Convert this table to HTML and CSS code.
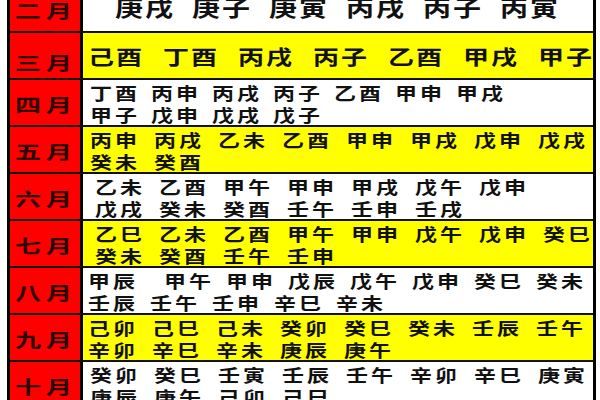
FILE: index.html
```html
<!DOCTYPE html>
<html lang="zh">
<head>
<meta charset="utf-8">
<title>月份干支表</title>
<link rel="stylesheet" href="styles.css">
</head>
<body>
<div class="table">
  <div class="row white">
    <div class="month"><span class="m">二月</span></div>
    <div class="cells big2 s-32">
      <div class="line"><span class="p">庚戌</span><span class="p">庚子</span><span class="p">庚寅</span><span class="p">丙戌</span><span class="p">丙子</span><span class="p">丙寅</span></div>
    </div>
  </div>
  <div class="row yellow">
    <div class="month low"><span class="m">三月</span></div>
    <div class="cells big s-5">
      <div class="line"><span class="p">己酉</span><span class="p">丁酉</span><span class="p">丙戌</span><span class="p">丙子</span><span class="p">乙酉</span><span class="p">甲戌</span><span class="p">甲子</span></div>
    </div>
  </div>
  <div class="row white">
    <div class="month"><span class="m">四月</span></div>
    <div class="cells tight s-7">
      <div class="line"><span class="p">丁酉</span><span class="p">丙申</span><span class="p">丙戌</span><span class="p">丙子</span><span class="p">乙酉</span><span class="p">甲申</span><span class="p">甲戌</span></div>
      <div class="line"><span class="p">甲子</span><span class="p">戊申</span><span class="p">戊戌</span><span class="p">戊子</span></div>
    </div>
  </div>
  <div class="row yellow">
    <div class="month"><span class="m">五月</span></div>
    <div class="cells s-7">
      <div class="line"><span class="p">丙申</span><span class="p">丙戌</span><span class="p">乙未</span><span class="p">乙酉</span><span class="p">甲申</span><span class="p">甲戌</span><span class="p">戊申</span><span class="p">戊戌</span></div>
      <div class="line"><span class="p">癸未</span><span class="p">癸酉</span></div>
    </div>
  </div>
  <div class="row white">
    <div class="month"><span class="m">六月</span></div>
    <div class="cells s-12">
      <div class="line"><span class="p">乙未</span><span class="p">乙酉</span><span class="p">甲午</span><span class="p">甲申</span><span class="p">甲戌</span><span class="p">戊午</span><span class="p">戊申</span></div>
      <div class="line"><span class="p">戊戌</span><span class="p">癸未</span><span class="p">癸酉</span><span class="p">壬午</span><span class="p">壬申</span><span class="p">壬戌</span></div>
    </div>
  </div>
  <div class="row yellow">
    <div class="month"><span class="m">七月</span></div>
    <div class="cells s-12">
      <div class="line"><span class="p">乙巳</span><span class="p">乙未</span><span class="p">乙酉</span><span class="p">甲午</span><span class="p">甲申</span><span class="p">戊午</span><span class="p">戊申</span><span class="p">癸巳</span></div>
      <div class="line"><span class="p">癸未</span><span class="p">癸酉</span><span class="p">壬午</span><span class="p">壬申</span></div>
    </div>
  </div>
  <div class="row white">
    <div class="month"><span class="m">八月</span></div>
    <div class="cells mid s-5">
      <div class="line"><span class="p wide">甲辰</span><span class="p">甲午</span><span class="p">甲申</span><span class="p">戊辰</span><span class="p">戊午</span><span class="p">戊申</span><span class="p">癸巳</span><span class="p">癸未</span></div>
      <div class="line"><span class="p">壬辰</span><span class="p">壬午</span><span class="p">壬申</span><span class="p">辛巳</span><span class="p">辛未</span></div>
    </div>
  </div>
  <div class="row yellow">
    <div class="month"><span class="m">九月</span></div>
    <div class="cells s-5">
      <div class="line"><span class="p">己卯</span><span class="p">己巳</span><span class="p">己未</span><span class="p">癸卯</span><span class="p">癸巳</span><span class="p">癸未</span><span class="p">壬辰</span><span class="p">壬午</span></div>
      <div class="line"><span class="p">辛卯</span><span class="p">辛巳</span><span class="p">辛未</span><span class="p">庚辰</span><span class="p">庚午</span></div>
    </div>
  </div>
  <div class="row white">
    <div class="month"><span class="m">十月</span></div>
    <div class="cells s-7">
      <div class="line"><span class="p">癸卯</span><span class="p">癸巳</span><span class="p">壬寅</span><span class="p">壬辰</span><span class="p">壬午</span><span class="p">辛卯</span><span class="p">辛巳</span><span class="p">庚寅</span></div>
      <div class="line"><span class="p">庚辰</span><span class="p">庚午</span><span class="p">己卯</span><span class="p">己巳</span></div>
    </div>
  </div>
</div>
</body>
</html>
```

FILE: styles.css
```css
* {
  box-sizing: border-box;
}

html,
body {
  margin: 0;
  padding: 0;
  background: #ffffff;
}

body {
  width: 600px;
  height: 400px;
  overflow: hidden;
  font-family: "Noto Sans CJK SC", "Noto Sans CJK TC", sans-serif;
}

.table {
  margin: -14px 0 0 7px;
  width: 589px;
  border-left: 3px solid #000;
  border-right: 3px solid #000;
}

.row {
  display: grid;
  grid-template-columns: 73px 1fr;
  height: 47px;
  border-bottom: 2px solid #111;
}

.month {
  background: #ff0000;
  border-right: 3px solid #000;
  display: flex;
  align-items: center;
  padding: 3px 0 0 5px;
}

.month.low {
  padding-top: 12px;
}

.m {
  display: inline-block;
  font-size: 26px;
  line-height: 26px;
  font-weight: 700;
  letter-spacing: 5px;
  color: #2a0505;
  transform: scaleY(0.72);
}

.cells {
  display: flex;
  flex-direction: column;
  justify-content: center;
  overflow: hidden;
  white-space: nowrap;
  font-size: 22px;
  line-height: 22px;
  font-weight: 700;
  letter-spacing: 3px;
  color: #111;
}

.yellow .cells {
  background: #ffff00;
}

.white .cells {
  background: #ffffff;
}

.line {
  height: 22px;
  transform: scaleY(0.78);
}

.p {
  display: inline-block;
  height: 22px;
  vertical-align: top;
  margin-right: 14px;
}

.tight .p {
  margin-right: 11px;
}

.mid .p {
  margin-right: 12px;
}

.mid .p.wide {
  margin-right: 26px;
}

.big {
  font-size: 26px;
  line-height: 30px;
  letter-spacing: 2px;
}

.big .line,
.big .p {
  height: 30px;
}

.big .p {
  margin-right: 19px;
}

.big2 {
  font-size: 28px;
  line-height: 30px;
  letter-spacing: 2px;
  padding-bottom: 4px;
}

.big2 .line,
.big2 .p {
  height: 30px;
}

.big2 .p {
  margin-right: 17px;
}

.s-5 {
  padding-left: 5px;
}

.s-7 {
  padding-left: 7px;
}

.s-12 {
  padding-left: 12px;
}

.s-32 {
  padding-left: 32px;
}
```
